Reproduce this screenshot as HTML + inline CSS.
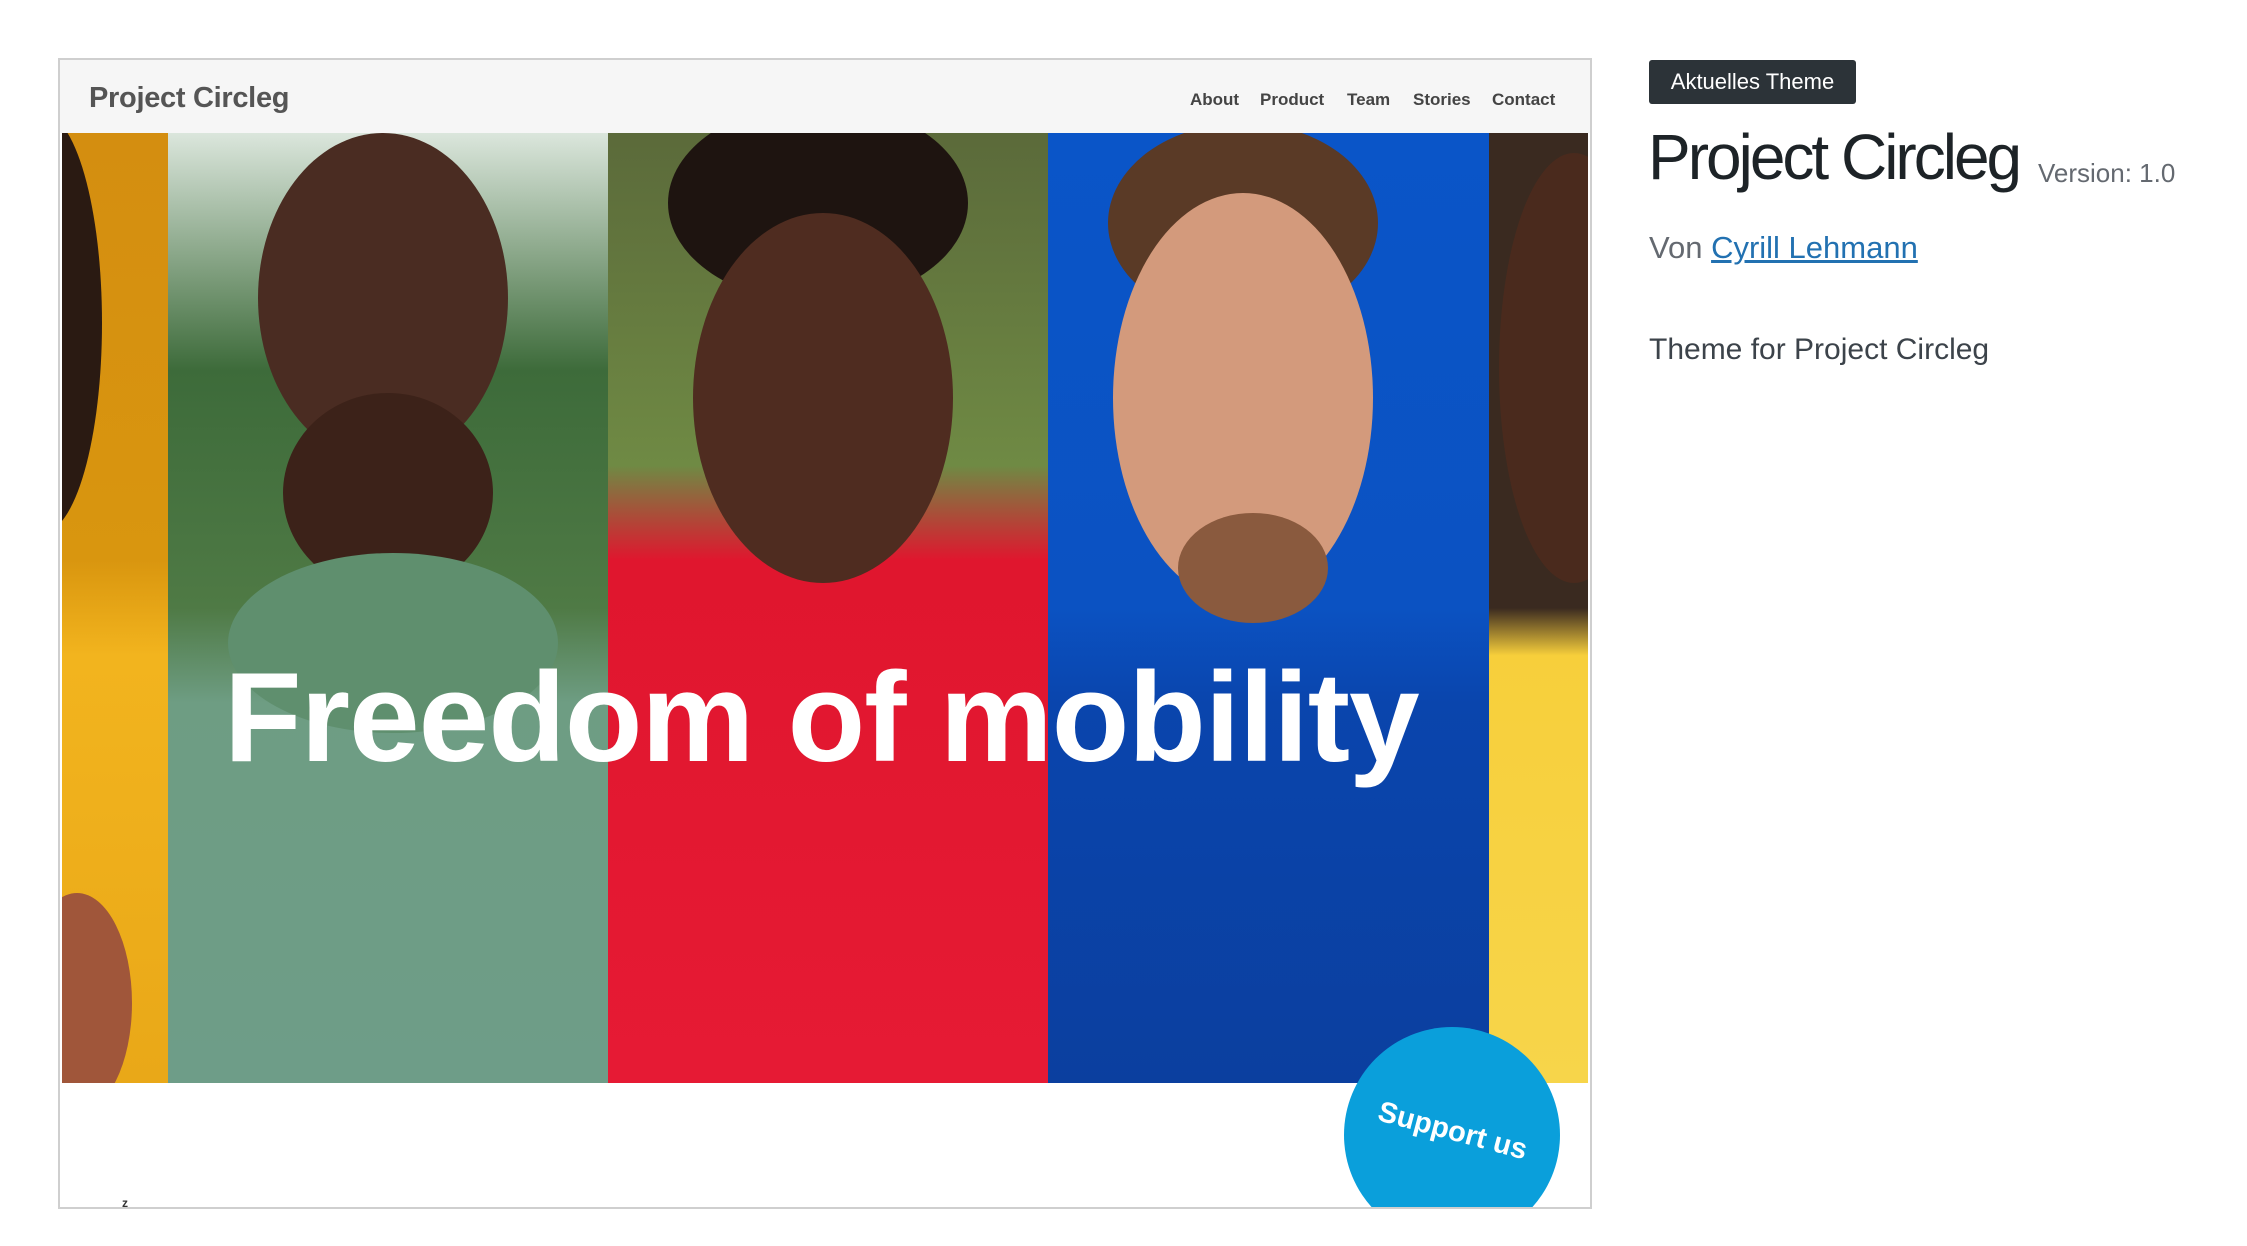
<!DOCTYPE html>
<html><head><meta charset="utf-8"><style>
html,body{margin:0;padding:0;background:#fff;width:2247px;height:1246px;overflow:hidden;font-family:"Liberation Sans",Arial,sans-serif}
.frame{position:absolute;left:58px;top:58px;width:1530px;height:1147px;border:2px solid #cfcfcf;background:#fff;overflow:hidden}
.hdr{position:absolute;left:0;top:0;width:100%;height:73px;background:#f6f6f6}
.logo{position:absolute;left:29px;top:22px;font-size:29px;font-weight:bold;color:#555;letter-spacing:-0.3px}
.nav{position:absolute;top:30px;font-size:17px;font-weight:bold;color:#444}
.hero{position:absolute;left:2px;top:73px;width:1526px;height:950px;overflow:hidden}
.s{position:absolute;top:0;height:100%;overflow:hidden}
.el{position:absolute;border-radius:50%}
.head{position:absolute;left:162px;top:521px;font-size:127px;font-weight:bold;color:#fff;letter-spacing:-1px;white-space:nowrap;line-height:1}
.btn{position:absolute;left:1284px;top:967px;width:216px;height:216px;border-radius:50%;background:#0a9fdb}
.btn span{position:absolute;left:32px;top:88px;color:#fff;font-weight:bold;font-size:29px;transform:rotate(15deg);white-space:nowrap}
.rp{position:absolute;left:-9px;top:0;width:2247px;height:600px;white-space:nowrap}
.badge{position:absolute;left:1658px;top:60px;width:207px;height:44px;background:#2c3338;border-radius:3px;color:#fff;font-size:22px;line-height:44px;text-align:center}
.t1{position:absolute;left:1657px;top:120px;font-size:64px;color:#1d2327;letter-spacing:-3px;white-space:nowrap}
.ver{position:absolute;left:2047px;top:158px;font-size:26px;color:#646970}
.von{position:absolute;left:1658px;top:230px;font-size:31px;color:#646970}
.von a{color:#2271b1;text-decoration:underline}
.desc{position:absolute;left:1658px;top:333px;font-size:30px;color:#3c434a}
</style></head><body>
<div class="frame">
 <div class="hdr">
  <div class="logo">Project Circleg</div>
  <div class="nav" style="left:1130px">About</div>
  <div class="nav" style="left:1200px">Product</div>
  <div class="nav" style="left:1287px">Team</div>
  <div class="nav" style="left:1353px">Stories</div>
  <div class="nav" style="left:1432px">Contact</div>
 </div>
 <div class="hero">
  <div class="s" style="left:0;width:108px;background:linear-gradient(#d48e10 0%,#d9960f 45%,#f2b41e 55%,#e9a818 100%)">
   <div class="el" style="left:-80px;top:-20px;width:120px;height:420px;background:#2a1a12"></div>
   <div class="el" style="left:-40px;top:760px;width:110px;height:220px;background:#a0563a"></div>
  </div>
  <div class="s" style="left:106px;width:440px;background:linear-gradient(#dbe6dc 0%,#3d6b3a 25%,#4f7a45 50%,#6e9d83 60%,#6e9d88 100%)">
   <div class="el" style="left:90px;top:0;width:250px;height:330px;background:#4a2c22"></div>
   <div class="el" style="left:115px;top:260px;width:210px;height:200px;background:#3c2219"></div>
   <div class="el" style="left:60px;top:420px;width:330px;height:180px;background:#5f8f6e"></div>
  </div>
  <div class="s" style="left:546px;width:440px;background:linear-gradient(#5b6a3a 0%,#6f8a44 35%,#e0162e 45%,#e61a34 100%)">
   <div class="el" style="left:60px;top:-30px;width:300px;height:200px;background:#1e1410"></div>
   <div class="el" style="left:85px;top:80px;width:260px;height:370px;background:#4f2c20"></div>
  </div>
  <div class="s" style="left:986px;width:441px;background:linear-gradient(#0a55c8 0%,#0b52c2 50%,#0a45ad 60%,#0b3f9f 100%)">
   <div class="el" style="left:60px;top:-10px;width:270px;height:200px;background:#5a3a26"></div>
   <div class="el" style="left:65px;top:60px;width:260px;height:410px;background:#d39a7c"></div>
   <div class="el" style="left:130px;top:380px;width:150px;height:110px;background:#8a5a3e"></div>
  </div>
  <div class="s" style="left:1427px;width:101px;background:linear-gradient(#3a2a20 0%,#3a2a20 50%,#f7cf3b 55%,#f7d54a 100%)">
   <div class="el" style="left:10px;top:20px;width:150px;height:430px;background:#4a2a1d"></div>
  </div>
  <div class="head">Freedom of mobility</div>
 </div>
 <div class="btn"><span>Support us</span></div>
 <div style="position:absolute;left:62px;top:1136px;font-size:12px;font-weight:bold;color:#333">z</div>
</div>
<div class="rp">
<div class="badge">Aktuelles Theme</div>
<div class="t1">Project Circleg</div>
<div class="ver">Version: 1.0</div>
<div class="von">Von <a>Cyrill Lehmann</a></div>
<div class="desc">Theme for Project Circleg</div>
</div>
</body></html>
